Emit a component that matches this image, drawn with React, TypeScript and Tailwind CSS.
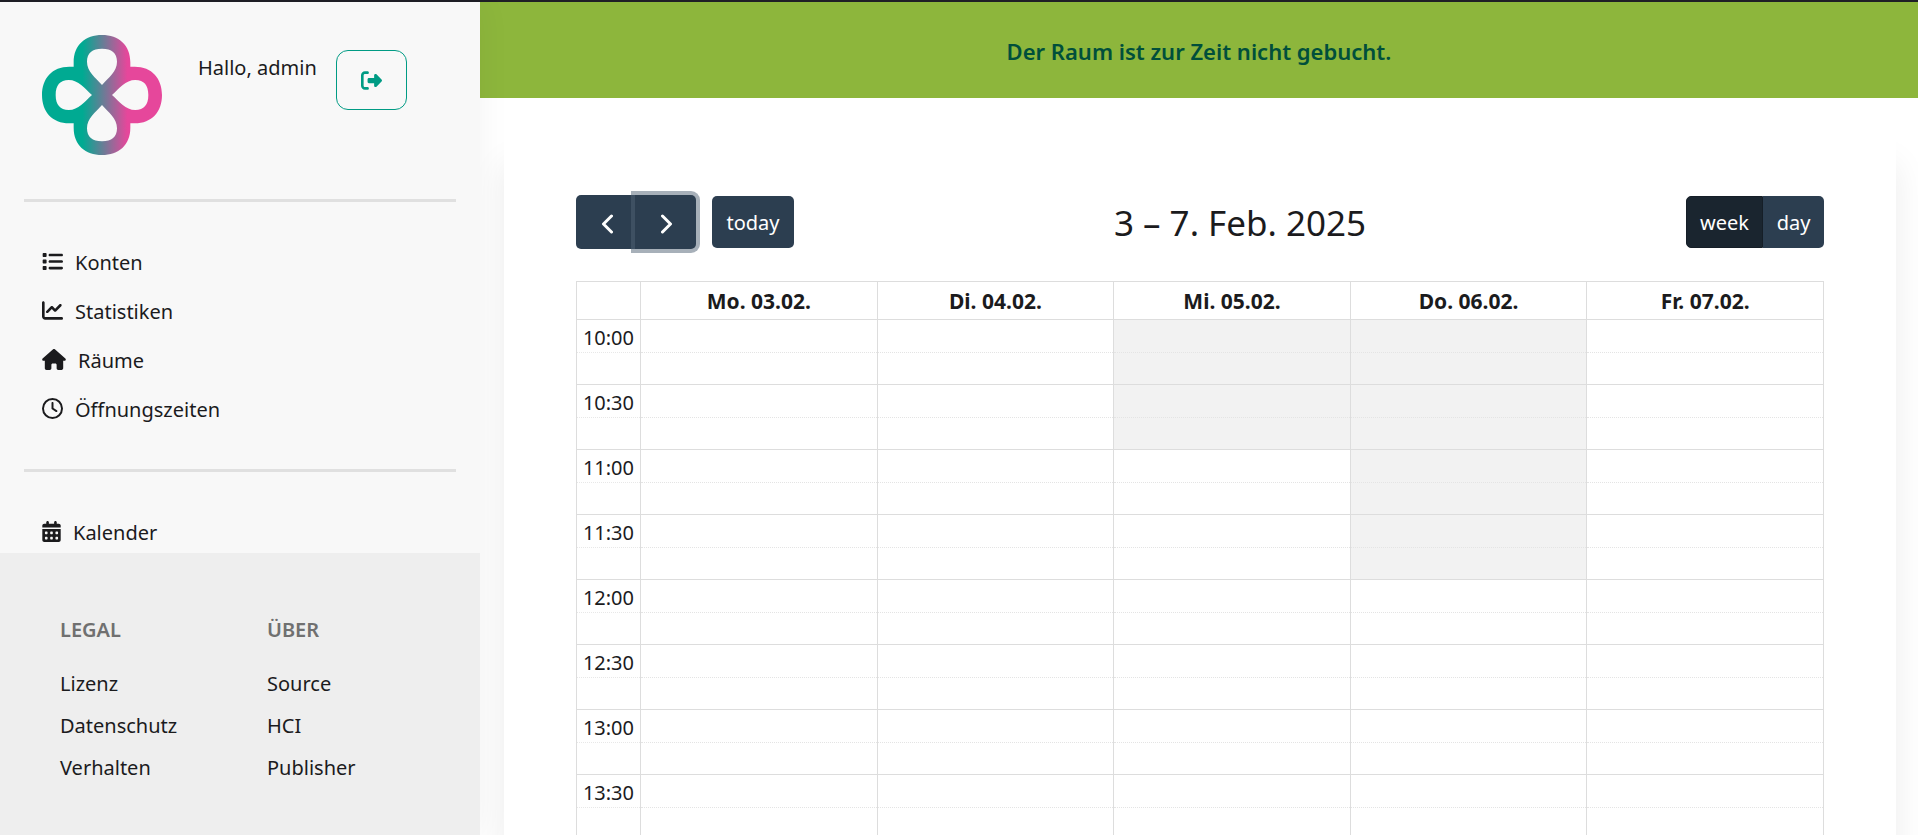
import type { ReactNode } from "react";
import {
  FaCalendarDays,
  FaChartLine,
  FaHouse,
  FaList,
  FaRegClock,
  FaRightFromBracket,
} from "react-icons/fa6";

const days = ["Mo. 03.02.", "Di. 04.02.", "Mi. 05.02.", "Do. 06.02.", "Fr. 07.02."];

const slots = ["10:00", "10:30", "11:00", "11:30", "12:00", "12:30", "13:00", "13:30"];

// Closed slots, keyed by day index.
const closed: Record<number, string[]> = {
  2: ["10:00", "10:30"],
  3: ["10:00", "10:30", "11:00", "11:30"],
};

function Logo() {
  const drop = "M180 150C160 127 135 110 135 80C135 54 151 41 180 41S225 54 225 80C225 110 200 127 180 150Z";
  return (
    <svg viewBox="0 0 360 360" className="size-[120px]" role="img" aria-label="Logo">
      <defs>
        <linearGradient id="clover" gradientUnits="userSpaceOnUse" x1="122" y1="0" x2="256" y2="0">
          <stop offset="0" stopColor="#00aa92" />
          <stop offset="1" stopColor="#e6479b" />
        </linearGradient>
        <mask id="drops">
          <rect width="360" height="360" fill="white" />
          <path d={drop} fill="black" />
          <path d={drop} fill="black" transform="rotate(90 180 180)" />
          <path d={drop} fill="black" transform="rotate(180 180 180)" />
          <path d={drop} fill="black" transform="rotate(270 180 180)" />
        </mask>
      </defs>
      <path
        mask="url(#drops)"
        fill="url(#clover)"
        d="M95 95V82C95 30 130 0 180 0S265 30 265 82V95H278C330 95 360 130 360 180S330 265 278 265H265V278C265 330 230 360 180 360S95 330 95 278V265H82C30 265 0 230 0 180S30 95 82 95Z"
      />
    </svg>
  );
}

function NavItem({ icon, children }: { icon: ReactNode; children: ReactNode }) {
  return (
    <li>
      <a href="#" className="flex h-[49px] items-center gap-3 px-[42px]">
        <span className="pb-0.5 text-[21px]">{icon}</span>
        {children}
      </a>
    </li>
  );
}

function FooterColumn({ title, links }: { title: string; links: string[] }) {
  return (
    <section>
      <h2 className="mb-3 font-semibold leading-[42px] text-[#707070]">{title}</h2>
      <ul>
        {links.map((link) => (
          <li key={link} className="leading-[42px]">
            <a href="#">{link}</a>
          </li>
        ))}
      </ul>
    </section>
  );
}

function Chevron({ d }: { d: string }) {
  return (
    <svg viewBox="0 0 12 20" className="ml-0.5 mt-1 h-5 w-3" fill="none" stroke="currentColor" strokeWidth="3" strokeLinecap="round" strokeLinejoin="round" aria-hidden="true">
      <path d={d} />
    </svg>
  );
}

function Sidebar() {
  return (
    <aside className="relative z-10 flex w-[480px] shrink-0 flex-col bg-[#f8f8f8] shadow-[0_0_32px_rgba(0,0,0,0.05)]">
      <header className="flex items-start px-[42px] pt-[33px]">
        <Logo />
        <p className="ml-9 mt-[15px] leading-9">Hallo, admin</p>
        <button
          type="button"
          aria-label="Abmelden"
          className="ml-auto mr-[31px] mt-[15px] flex h-[60px] w-[71px] items-center justify-center rounded-xl border border-[#009b84] text-[21px] text-[#009b84]"
        >
          <FaRightFromBracket />
        </button>
      </header>
      <nav className="min-h-0 flex-1 overflow-hidden pt-11">
        <hr className="mx-6 border-0 border-t-3 border-[#e0e0e0]" />
        <ul className="pb-[35px] pt-9">
          <NavItem icon={<FaList />}>Konten</NavItem>
          <NavItem icon={<FaChartLine />}>Statistiken</NavItem>
          <NavItem icon={<FaHouse className="h-[21px] w-6" />}>Räume</NavItem>
          <NavItem icon={<FaRegClock />}>Öffnungszeiten</NavItem>
        </ul>
        <hr className="mx-6 border-0 border-t-3 border-[#e0e0e0]" />
        <ul className="pb-[35px] pt-9">
          <NavItem icon={<FaCalendarDays className="h-[21px] w-[19px]" />}>Kalender</NavItem>
        </ul>
      </nav>
      <footer className="grid grid-cols-[207px_1fr] bg-[#eeeeee] px-[60px] pb-[46px] pt-14">
        <FooterColumn title="LEGAL" links={["Lizenz", "Datenschutz", "Verhalten"]} />
        <FooterColumn title="ÜBER" links={["Source", "HCI", "Publisher"]} />
      </footer>
    </aside>
  );
}

function Toolbar() {
  return (
    <div className="flex h-[54px] items-center justify-between text-white">
      <div className="flex items-center gap-4">
        <div className="flex">
          <button type="button" aria-label="Zurück" className="flex h-[54px] w-[59px] items-center justify-center rounded-l-[5px] bg-[#2c3e50]">
            <Chevron d="M10.5 2L2.5 10L10.5 18" />
          </button>
          <button
            type="button"
            aria-label="Weiter"
            className="flex h-[54px] w-[61px] items-center justify-center rounded-r-[5px] bg-[#2c3e50] shadow-[0_0_0_4px_rgba(79,98,115,0.5)]"
          >
            <Chevron d="M1.5 2L9.5 10L1.5 18" />
          </button>
        </div>
        <button type="button" className="h-[52px] w-[82px] rounded-[5px] bg-[#2c3e50] pt-0.5">
          today
        </button>
      </div>
      <h1 className="pt-0.5 text-[35px] text-[#1b1b1d]">3 – 7. Feb. 2025</h1>
      <div className="flex">
        <button type="button" aria-pressed="true" className="h-[52px] w-[77px] rounded-l-[5px] border border-[#151e27] bg-[#1a252f] pt-0.5">
          week
        </button>
        <button type="button" className="h-[52px] w-[61px] rounded-r-[5px] bg-[#2c3e50] pt-0.5">
          day
        </button>
      </div>
    </div>
  );
}

function WeekTable() {
  return (
    <table className="mt-8 w-full table-fixed border-collapse border border-[#dddddd]">
      <thead>
        <tr className="h-[38px]">
          <td className="w-16 border border-[#dddddd]" />
          {days.map((day) => (
            <th key={day} scope="col" className="border border-[#dddddd] p-0 text-[21px] font-bold leading-9">
              {day}
            </th>
          ))}
        </tr>
      </thead>
      <tbody>
        {slots.map((slot) => (
          <tr key={slot} className="h-[65px]">
            <th scope="row" className="border border-[#dddddd] p-0 align-top font-normal">
              <div className="h-[33px] border-b border-dotted border-[#e8e8e8] pr-1.5 text-right leading-9">{slot}</div>
              <div className="h-[31px]" />
            </th>
            {days.map((day, i) => (
              <td
                key={day}
                className={
                  closed[i]?.includes(slot)
                    ? "border border-[#dddddd] bg-[#f2f2f2] p-0"
                    : "border border-[#dddddd] p-0"
                }
              >
                <div className="h-[33px] border-b border-dotted border-[#e4e4e4]" />
                <div className="h-[31px]" />
              </td>
            ))}
          </tr>
        ))}
      </tbody>
    </table>
  );
}

export default function App() {
  return (
    <div className="flex h-screen flex-col overflow-hidden bg-white font-['Noto_Sans',sans-serif] text-[20px] text-[#1b1b1d]">
      <div className="h-0.5 shrink-0 bg-[#1f1f26]" />
      <div className="flex min-h-0 flex-1">
        <Sidebar />
        <main className="min-w-0 flex-1 overflow-hidden">
          <p role="status" className="bg-[#8db63c] pt-0.5 text-center text-[22px] font-semibold leading-[94px] text-[#004f3b]">
            Der Raum ist zur Zeit nicht gebucht.
          </p>
          <div className="mx-6 mr-[22px] mt-6 bg-white px-[72px] pb-[72px] pt-[73px] shadow-[0_42px_32px_rgba(0,0,0,0.08)]">
            <Toolbar />
            <WeekTable />
          </div>
        </main>
      </div>
    </div>
  );
}
